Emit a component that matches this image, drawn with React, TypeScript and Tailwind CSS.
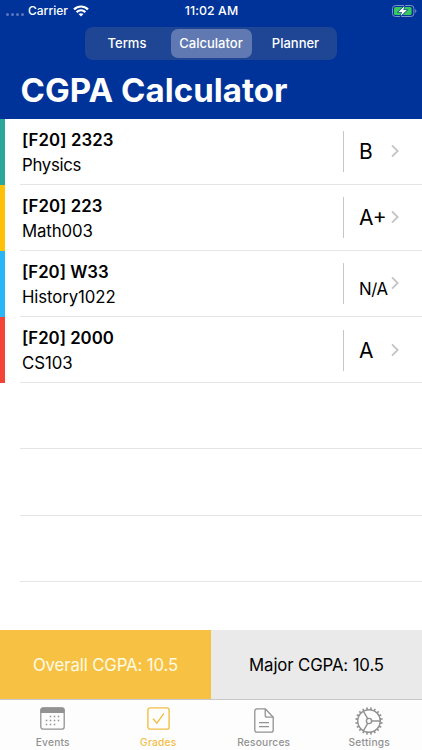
import { useState } from "react"

type Course = {
  title: string
  name: string
  grade: string
  color: string
  titleTracking: string
  nameTracking: string
}

const tabs = [
  { label: "Terms", className: "w-[84px] pr-[3px]" },
  { label: "Calculator", className: "w-[81px]" },
  { label: "Planner", className: "w-[84px] pl-[4px] tracking-[0px]" },
]

const courses: Course[] = [
  { title: "[F20] 2323", name: "Physics", grade: "B", color: "bg-[#2aa79a]", titleTracking: "tracking-[0.1px]", nameTracking: "tracking-[-0.3px]" },
  { title: "[F20] 223", name: "Math003", grade: "A+", color: "bg-[#fec107]", titleTracking: "tracking-[0.05px]", nameTracking: "tracking-[-0.13px]" },
  { title: "[F20] W33", name: "History1022", grade: "N/A", color: "bg-[#2ab5f6]", titleTracking: "tracking-[0px]", nameTracking: "tracking-[-0.1px]" },
  { title: "[F20] 2000", name: "CS103", grade: "A", color: "bg-[#f44437]", titleTracking: "tracking-[0px]", nameTracking: "tracking-[-0.05px]" },
]

function WifiIcon() {
  return (
    <svg className="ml-[5px] h-[12px] w-[16px]" viewBox="0 0 16 12" fill="none" stroke="white" strokeWidth="2.2">
      <path d="M1 4.4C5 .5 11 .5 15 4.4" />
      <path d="M3.6 7.1C6.2 4.7 9.8 4.7 12.4 7.1" />
      <path d="M8 11.6L5.5 9.1C6.9 7.8 9.1 7.8 10.5 9.1Z" fill="white" stroke="none" />
    </svg>
  )
}

function BatteryIcon() {
  return (
    <svg className="h-[12px] w-[25px]" viewBox="0 0 25 12" fill="none">
      <rect x="0.5" y="0.5" width="21.4" height="11" rx="3" stroke="#7b93c9" />
      <rect x="2" y="2" width="17.6" height="8" rx="1.6" fill="#36cb5c" />
      <path d="M23.2 4.2C24.8 4.7 24.8 7.3 23.2 7.8Z" fill="#7b93c9" />
      <path d="M12.4 .9L6.4 6.9h3.5L8.7 11.1L15 5.1h-3.6Z" fill="white" stroke="#00339b" strokeWidth="1.2" paintOrder="stroke" />
    </svg>
  )
}

function EventsIcon() {
  const dots = [
    [10.5, 9.5], [14.5, 9.5], [18.5, 9.5],
    [6.5, 13.5], [10.5, 13.5], [14.5, 13.5], [18.5, 13.5],
    [6.5, 17.5], [10.5, 17.5], [14.5, 17.5],
  ]
  return (
    <svg className="h-[23px] w-[25px]" viewBox="0 0 25 23" fill="none">
      <rect x="0.8" y="0.8" width="23.4" height="21.4" rx="2.5" stroke="#929292" strokeWidth="1.3" />
      <path d="M.5 6V3Q.5.5 3 .5H22Q24.5.5 24.5 3V6Z" fill="#929292" />
      {dots.map(([x, y]) => (
        <rect key={`${x}-${y}`} x={x - 0.75} y={y - 0.75} width="1.5" height="1.5" fill="#929292" />
      ))}
    </svg>
  )
}

function GradesIcon() {
  return (
    <svg className="h-[23px] w-[23px]" viewBox="0 0 23 23" fill="none" stroke="#f3bd45" strokeWidth="1.4">
      <rect x="0.9" y="0.9" width="21.2" height="21.2" rx="2.2" />
      <path d="M6 11.7L9.9 16.2L16.9 6.3" />
    </svg>
  )
}

function ResourcesIcon() {
  return (
    <svg className="h-[25px] w-[20px]" viewBox="0 0 20 25" fill="none" stroke="#929292" strokeWidth="1.3" strokeLinejoin="round">
      <path d="M11.2.8H3Q.8.8.8 3V22Q.8 24.2 3 24.2H17Q19.2 24.2 19.2 22V9.2Z" />
      <path d="M11.2.8V7Q11.2 9.2 13.4 9.2H19.2M5 14.6H15M5 18.6H15" />
    </svg>
  )
}

function SettingsIcon() {
  const teeth = Array.from({ length: 20 }, (_, i) => i * 18)
  return (
    <svg className="h-[28px] w-[28px]" viewBox="0 0 28 28" fill="none" stroke="#929292" strokeWidth="1.4">
      <circle cx="14" cy="14" r="11.3" />
      <circle cx="14" cy="14" r="2.6" />
      <path d="M16.6 14H25.1M12.7 11.7L8.5 4.4M12.7 16.3L8.5 23.6" />
      {teeth.map((angle) => (
        <path key={angle} d="M14 3V.3" strokeWidth="1.6" transform={`rotate(${angle + 9} 14 14)`} />
      ))}
    </svg>
  )
}

function CourseRow({ course }: { course: Course }) {
  const small = course.grade === "N/A"
  return (
    <button className="flex h-[66.2px] w-full text-left">
      <div className={`h-full w-[5px] shrink-0 ${course.color}`} />
      <div className="ml-[15px] flex h-full flex-1 border-b border-[#e5e5e5]">
        <div className="flex-1 pl-[2px] pt-[9px]">
          <div className={`text-[16.8px] leading-[25px] font-semibold ${course.titleTracking}`}>{course.title}</div>
          <div className={`text-[16.8px] leading-[24px] ${course.nameTracking}`}>{course.name}</div>
        </div>
        <div className="mt-[12.5px] h-[41px] w-px bg-[#c6c6c8]" />
        <div className="flex w-[78px] pl-[15px]">
          <div
            className={
              small
                ? "w-[32px] pt-[24px] text-[16.8px] leading-[28px] tracking-[-0.4px]"
                : "w-[32px] pt-[19.5px] text-[21px] leading-[28px]"
            }
          >
            {course.grade}
          </div>
          <svg className="mt-[25.5px] h-[14px] w-[8px]" viewBox="0 0 8 14" fill="none" stroke="#c4c4c7" strokeWidth="1.8">
            <path d="M1 1.3L6.7 7L1 12.7" />
          </svg>
        </div>
      </div>
    </button>
  )
}

export default function App() {
  const [activeTab, setActiveTab] = useState("Calculator")

  return (
    <div className="flex h-[750px] w-[422px] flex-col overflow-hidden bg-white font-['Inter','Liberation_Sans',sans-serif] text-black">
      {/* Header */}
      <header className="h-[118.5px] shrink-0 bg-[#003399] text-white">
        <div className="grid h-[21px] grid-cols-3 items-center pl-[6px] pr-[5px] text-[12.3px] font-medium">
          <div className="flex items-center">
            <div className="mt-[7px] mr-[4px] flex gap-[2px]">
              {[0, 1, 2, 3].map((dot) => (
                <span key={dot} className="h-[3px] w-[3px] rounded-full bg-[#5878bd]" />
              ))}
            </div>
            <span className="pt-px text-[12px] tracking-[0px]">Carrier</span>
            <WifiIcon />
          </div>
          <div className="pt-px text-center tracking-[0.1px]">11:02 AM</div>
          <div className="flex justify-end">
            <BatteryIcon />
          </div>
        </div>

        <div className="mx-auto mt-[6px] flex h-[32.5px] w-[252px] items-center justify-center rounded-[8px] bg-[#1f4694]">
          {tabs.map((tab) => (
            <button
              key={tab.label}
              onClick={() => setActiveTab(tab.label)}
              className={`h-[28.5px] rounded-[7px] text-[13px] font-medium ${tab.className} ${
                activeTab === tab.label ? "bg-[#6079b3]" : ""
              }`}
            >
              {tab.label}
            </button>
          ))}
        </div>

        <h1 className="pt-[10px] pl-[20.5px] text-[33px] leading-[40px] font-bold tracking-[0.05px]">CGPA Calculator</h1>
      </header>

      {/* Courses */}
      <main className="min-h-0 flex-1 overflow-hidden">
        {courses.map((course) => (
          <CourseRow key={course.title} course={course} />
        ))}
        {[0, 1, 2].map((row) => (
          <div key={row} className="ml-[20px] h-[66.2px] border-b border-[#e5e5e5]" />
        ))}
      </main>

      {/* Totals */}
      <section className="grid h-[69px] shrink-0 grid-cols-2 text-[16.8px]">
        <div className="flex items-center justify-center bg-[#f7c244] pt-[3px] tracking-[-0.13px] text-[#fffbe4]">Overall CGPA: 10.5</div>
        <div className="flex items-center justify-center bg-[#eaeaea] pt-[3px] tracking-[-0.13px]">Major CGPA: 10.5</div>
      </section>

      {/* Tab bar */}
      <nav className="grid h-[51px] shrink-0 grid-cols-4 border-t border-[#c8c8c8] bg-[#fdfdfd] text-[10.2px] leading-[14px] font-medium tracking-[0.2px] text-[#929292]">
        <button className="flex flex-col items-center">
          <div className="flex h-[35px] items-center pt-[2px]"><EventsIcon /></div>
          Events
        </button>
        <button className="flex flex-col items-center text-[#f3bd45]">
          <div className="flex h-[35px] items-center pt-[2px]"><GradesIcon /></div>
          Grades
        </button>
        <button className="flex flex-col items-center">
          <div className="flex h-[35px] items-center pt-[6px]"><ResourcesIcon /></div>
          Resources
        </button>
        <button className="flex flex-col items-center">
          <div className="flex h-[35px] items-center pt-[7px]"><SettingsIcon /></div>
          Settings
        </button>
      </nav>
    </div>
  )
}
